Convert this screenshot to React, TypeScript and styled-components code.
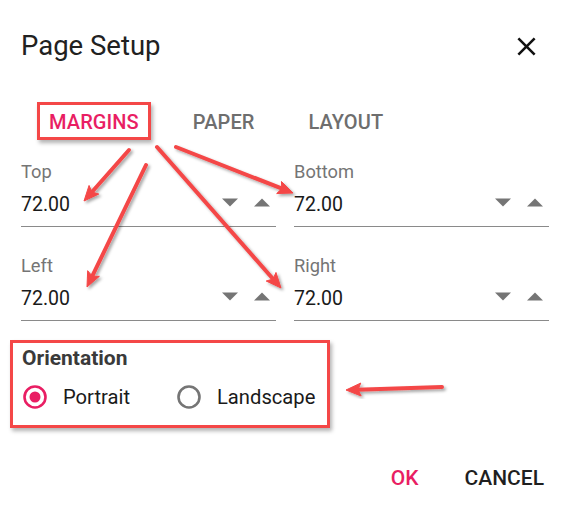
import React from "react";
import styled, { createGlobalStyle } from "styled-components";

const GlobalStyle = createGlobalStyle`
  html, body { margin: 0; padding: 0; background: #ffffff; }
  body { font-family: Roboto, "Liberation Sans", Arial, sans-serif; }
  * { box-sizing: border-box; }
`;

const PINK = "#e91e63";
const RED = "#f44747";

const Page = styled.div`
  position: relative;
  width: 568px;
  height: 512px;
  overflow: hidden;
  background: #fff;
`;

const Dialog = styled.div`
  display: flex;
  flex-direction: column;
  padding: 31px 19px 0 21px;
`;

const Header = styled.div`
  display: flex;
  align-items: center;
  justify-content: space-between;
  height: 30px;
`;

const Title = styled.h1`
  margin: 0;
  font-size: 27.5px;
  font-weight: 400;
  line-height: 30px;
  color: #212121;
`;

const CloseButton = styled.button`
  border: 0;
  background: none;
  padding: 0;
  margin-right: 7px;
  width: 31px;
  height: 31px;
  display: flex;
  align-items: center;
  justify-content: center;
  color: #111;
`;

const Tabs = styled.div`
  display: flex;
  align-items: center;
  gap: 30px;
  margin: 41px 0 0 16px;
`;

const Tab = styled.div<{ $active?: boolean; $marked?: boolean }>`
  height: 38px;
  display: flex;
  align-items: center;
  padding: 2px 9px 0 9px;
  border: 3px solid ${(p) => (p.$marked ? RED : "transparent")};
  box-shadow: ${(p) => (p.$marked ? "2px 3px 4px rgba(0,0,0,0.3)" : "none")};
  font-size: 20px;
  font-weight: 500;
  letter-spacing: 0.1px;
  color: ${(p) => (p.$active ? PINK : "#6e6e6e")};
`;

const FieldGrid = styled.div`
  display: grid;
  grid-template-columns: 255px 255px;
  column-gap: 18px;
  row-gap: 29px;
  margin-top: 22px;
`;

const Field = styled.div`
  display: flex;
  flex-direction: column;
`;

const FieldLabel = styled.label`
  font-size: 18.3px;
  line-height: 20px;
  color: #757575;
`;

const InputRow = styled.div`
  display: flex;
  align-items: center;
  height: 45px;
  border-bottom: 1px solid #8a8a8a;
  padding-right: 6px;
  padding-bottom: 0;
`;

const Value = styled.span`
  flex: 1;
  font-size: 19.5px;
  color: #1a1a1a;
`;

const Spinners = styled.div`
  display: flex;
  align-items: center;
  gap: 16px;
  margin-top: -4px;
`;

const Orientation = styled.fieldset`
  margin: 19px 0 0 -11px;
  width: 320px;
  height: 88px;
  border: 3px solid ${RED};
  box-shadow: 2px 3px 4px rgba(0, 0, 0, 0.3);
  padding: 4px 9px 10px 9px;
  display: flex;
  flex-direction: column;
`;

const OrientationTitle = styled.div`
  font-size: 21px;
  font-weight: 700;
  line-height: 22px;
  color: #3a3a3a;
`;

const RadioRow = styled.div`
  display: flex;
  align-items: center;
  gap: 46px;
  height: 36px;
  margin-top: 10px;
`;

const RadioOption = styled.label`
  display: flex;
  align-items: center;
  gap: 16px;
  font-size: 20.2px;
  color: #1a1a1a;
  margin-left: 1px;
`;

const Footer = styled.div`
  display: flex;
  justify-content: flex-end;
  align-items: center;
  gap: 36px;
  height: 36px;
  margin-top: 32px;
`;

const ActionButton = styled.button<{ $primary?: boolean }>`
  border: 0;
  background: none;
  padding: 0 5px;
  font-family: inherit;
  font-size: 21px;
  font-weight: 500;
  color: ${(p) => (p.$primary ? PINK : "#1f1f1f")};
`;

const Overlay = styled.svg`
  position: absolute;
  left: 0;
  top: 0;
  pointer-events: none;
`;

const Triangle = ({ up }: { up?: boolean }) => (
  <svg width="16" height="9" viewBox="0 0 16 9">
    <polygon points={up ? "0,8.5 8,0.5 16,8.5" : "0,0.5 16,0.5 8,8.5"} fill="#757575" />
  </svg>
);

const Radio = ({ checked }: { checked?: boolean }) => (
  <svg width="24" height="24" viewBox="0 0 24 24">
    <circle cx="12" cy="12" r="10.5" fill="none" stroke={checked ? PINK : "#757575"} strokeWidth="2.6" />
    {checked && <circle cx="12" cy="12" r="5.5" fill={PINK} />}
  </svg>
);

type Arrow = [number, number, number, number];

const arrows: Arrow[] = [
  [129, 150, 84, 201],
  [146, 165, 87, 287],
  [157, 147, 281, 288],
  [176, 147, 293, 193],
  [442, 387, 346, 390],
];

const ArrowShape = ({ a }: { a: Arrow }) => {
  const [x1, y1, x2, y2] = a;
  const dx = x2 - x1;
  const dy = y2 - y1;
  const len = Math.hypot(dx, dy);
  const ux = dx / len;
  const uy = dy / len;
  const headLen = 15;
  const headHalf = 6.5;
  const bx = x2 - ux * headLen;
  const by = y2 - uy * headLen;
  const px = -uy;
  const py = ux;
  const pts = `${x2},${y2} ${bx + px * headHalf},${by + py * headHalf} ${bx + ux * 3},${by + uy * 3} ${bx - px * headHalf},${by - py * headHalf}`;
  return (
    <g filter="url(#shadow)">
      <line x1={x1} y1={y1} x2={bx + ux * 4} y2={by + uy * 4} stroke={RED} strokeWidth="4" strokeLinecap="round" />
      <polygon points={pts} fill={RED} stroke={RED} strokeWidth="1" strokeLinejoin="round" />
    </g>
  );
};

const fields = ["Top", "Bottom", "Left", "Right"];

export default function App() {
  return (
    <>
      <GlobalStyle />
      <Page>
        <Dialog>
          <Header>
            <Title>Page Setup</Title>
            <CloseButton aria-label="close">
              <svg width="31" height="31" viewBox="0 0 24 24">
                <path
                  fill="currentColor"
                  d="M19 6.41 17.59 5 12 10.59 6.41 5 5 6.41 10.59 12 5 17.59 6.41 19 12 13.41 17.59 19 19 17.59 13.41 12z"
                />
              </svg>
            </CloseButton>
          </Header>
          <Tabs>
            <Tab $active $marked>MARGINS</Tab>
            <Tab>PAPER</Tab>
            <Tab>LAYOUT</Tab>
          </Tabs>
          <FieldGrid>
            {fields.map((f) => (
              <Field key={f}>
                <FieldLabel>{f}</FieldLabel>
                <InputRow>
                  <Value>72.00</Value>
                  <Spinners>
                    <Triangle />
                    <Triangle up />
                  </Spinners>
                </InputRow>
              </Field>
            ))}
          </FieldGrid>
          <Orientation>
            <OrientationTitle>Orientation</OrientationTitle>
            <RadioRow>
              <RadioOption>
                <Radio checked />
                Portrait
              </RadioOption>
              <RadioOption>
                <Radio />
                Landscape
              </RadioOption>
            </RadioRow>
          </Orientation>
          <Footer>
            <ActionButton $primary>OK</ActionButton>
            <ActionButton>CANCEL</ActionButton>
          </Footer>
        </Dialog>
        <Overlay width="568" height="512" viewBox="0 0 568 512">
          <defs>
            <filter id="shadow" x="-20%" y="-20%" width="140%" height="140%">
              <feDropShadow dx="2" dy="2" stdDeviation="1.5" floodColor="#000" floodOpacity="0.35" />
            </filter>
          </defs>
          {arrows.map((a, i) => (
            <ArrowShape key={i} a={a} />
          ))}
        </Overlay>
      </Page>
    </>
  );
}
